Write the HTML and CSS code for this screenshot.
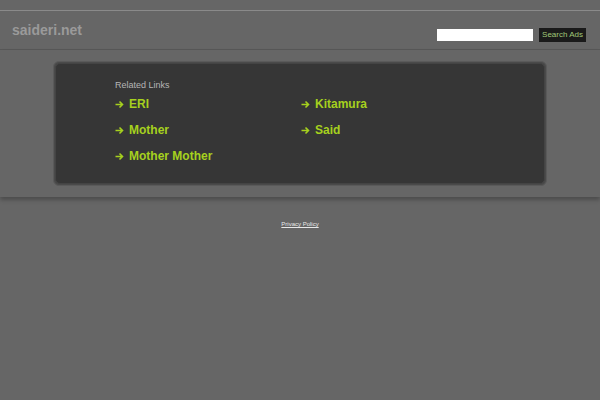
FILE: index.html
```html
<!DOCTYPE html>
<html>
<head>
<meta charset="utf-8">
<link rel="stylesheet" href="styles.css">
</head>
<body>
<div class="topgap"></div>
<header class="header">
  <div class="logo">saideri.net</div>
  <form class="search">
    <input class="search-input" type="text">
    <button class="search-btn" type="button">Search Ads</button>
  </form>
</header>
<section class="band">
  <div class="box">
    <div class="box-inner">
      <div class="title">Related Links</div>
      <div class="links">
        <a class="link" href="#"><svg class="arrow" viewBox="0 0 9 9"><path d="M0.5 4.5H7.5M4.5 1.5L7.5 4.5L4.5 7.5"/></svg>ERI</a>
        <a class="link" href="#"><svg class="arrow" viewBox="0 0 9 9"><path d="M0.5 4.5H7.5M4.5 1.5L7.5 4.5L4.5 7.5"/></svg>Kitamura</a>
        <a class="link" href="#"><svg class="arrow" viewBox="0 0 9 9"><path d="M0.5 4.5H7.5M4.5 1.5L7.5 4.5L4.5 7.5"/></svg>Mother</a>
        <a class="link" href="#"><svg class="arrow" viewBox="0 0 9 9"><path d="M0.5 4.5H7.5M4.5 1.5L7.5 4.5L4.5 7.5"/></svg>Said</a>
        <a class="link" href="#"><svg class="arrow" viewBox="0 0 9 9"><path d="M0.5 4.5H7.5M4.5 1.5L7.5 4.5L4.5 7.5"/></svg>Mother Mother</a>
      </div>
    </div>
  </div>
</section>
<footer class="footer"><a href="#" class="privacy">Privacy Policy</a></footer>
</body>
</html>
```

FILE: styles.css
```css
html, body {
  margin: 0;
  padding: 0;
  background: #666666;
  font-family: "Liberation Sans", Arial, sans-serif;
  height: 100%;
}
.topgap {
  height: 10px;
  background: #666666;
  border-bottom: 1px solid #8a8a8a;
}
.header {
  height: 38px;
  display: flex;
  align-items: center;
  justify-content: space-between;
  padding: 0 14px 0 12px;
  border-bottom: 1px solid #585858;
  background: #666666;
}
.logo {
  font-weight: bold;
  font-size: 14px;
  color: #9a9a9a;
  margin-top: -1px;
}
.search {
  display: flex;
  align-items: center;
  gap: 6px;
  margin-top: 9px;
}
.search-input {
  width: 96px;
  height: 12px;
  padding: 0;
  border: none;
  background: #ffffff;
}
.search-btn {
  height: 14px;
  padding: 0 3px;
  border: none;
  background: #1a1a1a;
  color: #a0c878;
  font-family: "Liberation Sans", Arial, sans-serif;
  font-size: 8px;
  line-height: 14px;
}
.band {
  padding: 11px 0 10px;
  box-shadow: 0 3px 4px rgba(0,0,0,0.25);
  background: #666666;
  height: 126px;
}
.box {
  width: 494px;
  margin: 0 auto;
  padding: 1px;
  border-radius: 6px;
  background: #4a4a4a;
  border: 1px solid #5a5a5a;
  box-sizing: border-box;
  height: 125px;
}
.box-inner {
  background: #363636;
  border-radius: 5px;
  height: 100%;
  box-sizing: border-box;
  padding: 16px 0 0 59px;
  border: 1px solid #444;
}
.title {
  font-size: 9px;
  color: #b5b5b5;
  margin-bottom: 6px;
}
.links {
  display: grid;
  grid-template-columns: 186px 186px;
  row-gap: 10px;
}
.link {
  display: flex;
  align-items: center;
  color: #a6d11e;
  font-weight: bold;
  font-size: 12px;
  line-height: 16px;
  text-decoration: none;
  white-space: nowrap;
}
.arrow {
  width: 9px;
  height: 9px;
  margin-right: 5px;
  fill: none;
  stroke: #a6d11e;
  stroke-width: 1.6;
}
.footer {
  text-align: center;
  padding-top: 15px;
}
.privacy {
  color: #e8e8e8;
  font-size: 6px;
  text-decoration: underline;
}
```
